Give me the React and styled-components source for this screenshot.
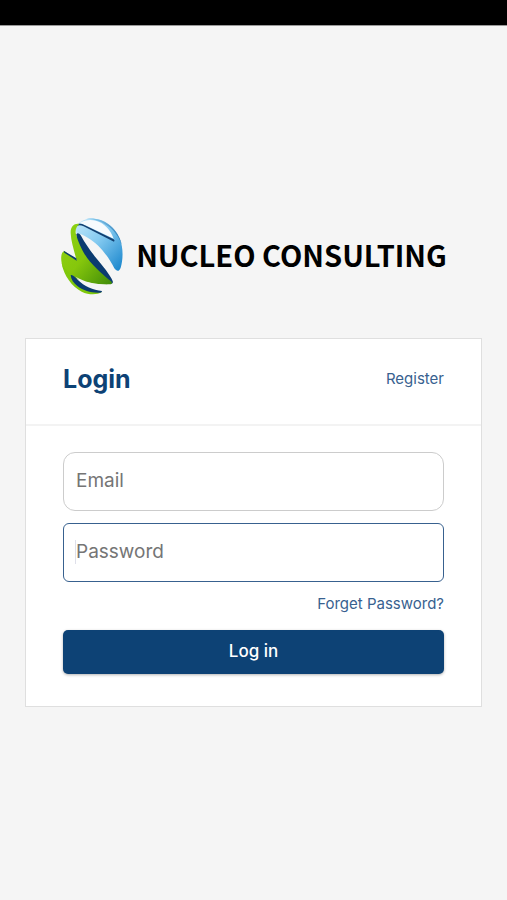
import React from "react";
import styled, { createGlobalStyle } from "styled-components";

const colors = {
  primary: "#0d4275",
  link: "#38618f",
  background: "#f5f5f5",
  border: "#dfdfdf",
  inputBorder: "#cccccc",
  placeholder: "#757575",
};

const LogoMark = () => (
  <Mark viewBox="33 36 192 234" aria-hidden="true">
    <defs>
      <linearGradient id="blue" x1="0" y1="0" x2="1" y2="1">
        <stop offset="0" stopColor="#c4e9fb" />
        <stop offset="0.45" stopColor="#84caf0" />
        <stop offset="1" stopColor="#1583cb" />
      </linearGradient>
      <linearGradient id="green" x1="0" y1="0" x2="1" y2="1">
        <stop offset="0" stopColor="#8ed414" />
        <stop offset="0.5" stopColor="#86c70c" />
        <stop offset="1" stopColor="#3f8b08" />
      </linearGradient>
      <linearGradient id="rim" x1="0" y1="0" x2="1" y2="1">
        <stop offset="0" stopColor="#8ccdf0" />
        <stop offset="1" stopColor="#1d6fae" />
      </linearGradient>
    </defs>
    {/* blue half with its highlight */}
    <path
      d="M80 66C88 52 104 43 120 41C160 36 196 64 212 100C224 130 222 164 215 188C211 200 203 200 196 190C180 158 152 118 116 98C104 90 92 86 82 84Z"
      fill="url(#blue)"
    />
    <path
      d="M92 54C106 45 124 43 140 47C166 53 186 76 194 101L108 60C101 57 96 55 92 54Z"
      fill="#f7fbfd"
    />
    <path
      d="M112 41C162 35 205 65 219 120C204 76 166 44 112 41Z"
      fill="url(#rim)"
    />
    <path
      d="M84 60C90 54 98 56 106 60L194 103Q199 107 195 110L104 64C96 60 90 59 84 63Z"
      fill="#123f70"
    />
    {/* navy edge, then the green leaf over it */}
    <path
      d="M82 88C84 82 92 84 96 92C108 114 122 134 142 160C162 184 182 208 191 228Q194 238 184 236C140 214 100 176 92 142C86 122 82 106 82 88Z"
      fill="#0b3b70"
    />
    <path
      d="M91 57C76 54 64 66 65 84C66 110 76 138 82 164L46 138C36 142 35 158 38 174C41 190 50 206 62 212C92 228 134 240 182 238C190 237 190 233 186 229C158 206 124 176 106 146C92 122 84 100 80 84C79 70 84 64 91 57Z"
      fill="url(#green)"
    />
    <path d="M44 137L82 160L83 167L46 143Z" fill="#0b3b70" />
    {/* lower crescent */}
    <path
      d="M38 174C44 212 70 246 98 260C119 270 143 270 159 262C119 262 84 238 70 208C58 202 46 192 38 174Z"
      fill="#7fc80b"
    />
    <path
      d="M65 211C70 208 78 216 86 224C106 244 132 255 159 258Q160 262 154 263C130 265 104 258 86 244C74 234 66 224 65 211Z"
      fill="#0b3b70"
    />
    <path
      d="M80 215C104 230 138 238 174 239C158 245 132 247 112 240C98 234 88 224 80 215Z"
      fill="#f5f5f5"
    />
  </Mark>
);

const App = () => (
  <>
    <GlobalStyle />
    <Page>
      <StatusBar />
      <Content>
        <Brand>
          <LogoMark />
          <BrandName>NUCLEO CONSULTING</BrandName>
        </Brand>
        <Card>
          <CardHeader>
            <Title>Login</Title>
            <TextLink href="#register">Register</TextLink>
          </CardHeader>
          <Form onSubmit={(e) => e.preventDefault()}>
            <Field>
              <Input type="email" placeholder="Email" aria-label="Email" />
            </Field>
            <Field>
              <Input
                type="password"
                placeholder="Password"
                aria-label="Password"
                $active
              />
              <Caret />
            </Field>
            <ForgetRow>
              <TextLink href="#forget">Forget Password?</TextLink>
            </ForgetRow>
            <SubmitButton type="submit">Log in</SubmitButton>
          </Form>
        </Card>
      </Content>
    </Page>
  </>
);

export default App;

const GlobalStyle = createGlobalStyle`
  * {
    box-sizing: border-box;
  }

  body {
    margin: 0;
    background: ${colors.background};
    font-family: Inter, "Liberation Sans", sans-serif;
  }
`;

const Page = styled.div`
  display: flex;
  flex-direction: column;
  min-height: 100vh;
`;

const StatusBar = styled.div`
  height: 26px;
  background: #000;
  border-bottom: 1px solid #999;
`;

const Content = styled.main`
  flex: 1;
  display: flex;
  flex-direction: column;
  justify-content: center;
  gap: 43px;
  padding: 0 25px 2px;
`;

const Brand = styled.div`
  display: flex;
  align-items: center;
  justify-content: center;
  gap: 12px;
`;

const Mark = styled.svg`
  flex: none;
  width: 64px;
  height: 78px;
`;

const BrandName = styled.span`
  padding-bottom: 4px;
  font-family: "Noto Sans CJK SC", "Open Sans", sans-serif;
  font-size: 29px;
  font-weight: 700;
  line-height: 40px;
  white-space: nowrap;
  color: #000;
`;

const Card = styled.section`
  background: #fff;
  border: 1px solid ${colors.border};
`;

const CardHeader = styled.header`
  display: flex;
  align-items: center;
  justify-content: space-between;
  padding: 24px 37px 29px;
  border-bottom: 2px solid #f3f3f3;
`;

const Title = styled.h1`
  margin: 0;
  font-size: 25px;
  font-weight: 700;
  line-height: 32px;
  color: ${colors.primary};
`;

const TextLink = styled.a`
  font-size: 15px;
  line-height: 20px;
  color: ${colors.link};
  text-decoration: none;
`;

const Form = styled.form`
  display: flex;
  flex-direction: column;
  gap: 12px;
  padding: 26px 37px 32px;
`;

const Field = styled.div`
  position: relative;
`;

const Input = styled.input`
  display: block;
  width: 100%;
  height: 59px;
  padding: 0 12px 3px;
  border: 1px solid
    ${({ $active }) => ($active ? colors.link : colors.inputBorder)};
  border-radius: ${({ $active }) => ($active ? "6px" : "12px")};
  background: #fff;
  font-family: inherit;
  font-size: 19px;
  outline: none;

  &::placeholder {
    color: ${colors.placeholder};
    opacity: 1;
  }
`;

const Caret = styled.span`
  position: absolute;
  top: 17px;
  left: 12px;
  width: 1px;
  height: 24px;
  background: #dfe0ea;
`;

const ForgetRow = styled.div`
  display: flex;
  justify-content: flex-end;
  padding-bottom: 4px;
`;

const SubmitButton = styled.button`
  height: 44px;
  padding: 0 16px 2px;
  border: 0;
  border-radius: 5px;
  background: ${colors.primary};
  box-shadow: 0 1px 3px rgba(0, 0, 0, 0.3);
  font-family: inherit;
  font-size: 17px;
  font-weight: 500;
  color: #fff;
  cursor: pointer;
`;
